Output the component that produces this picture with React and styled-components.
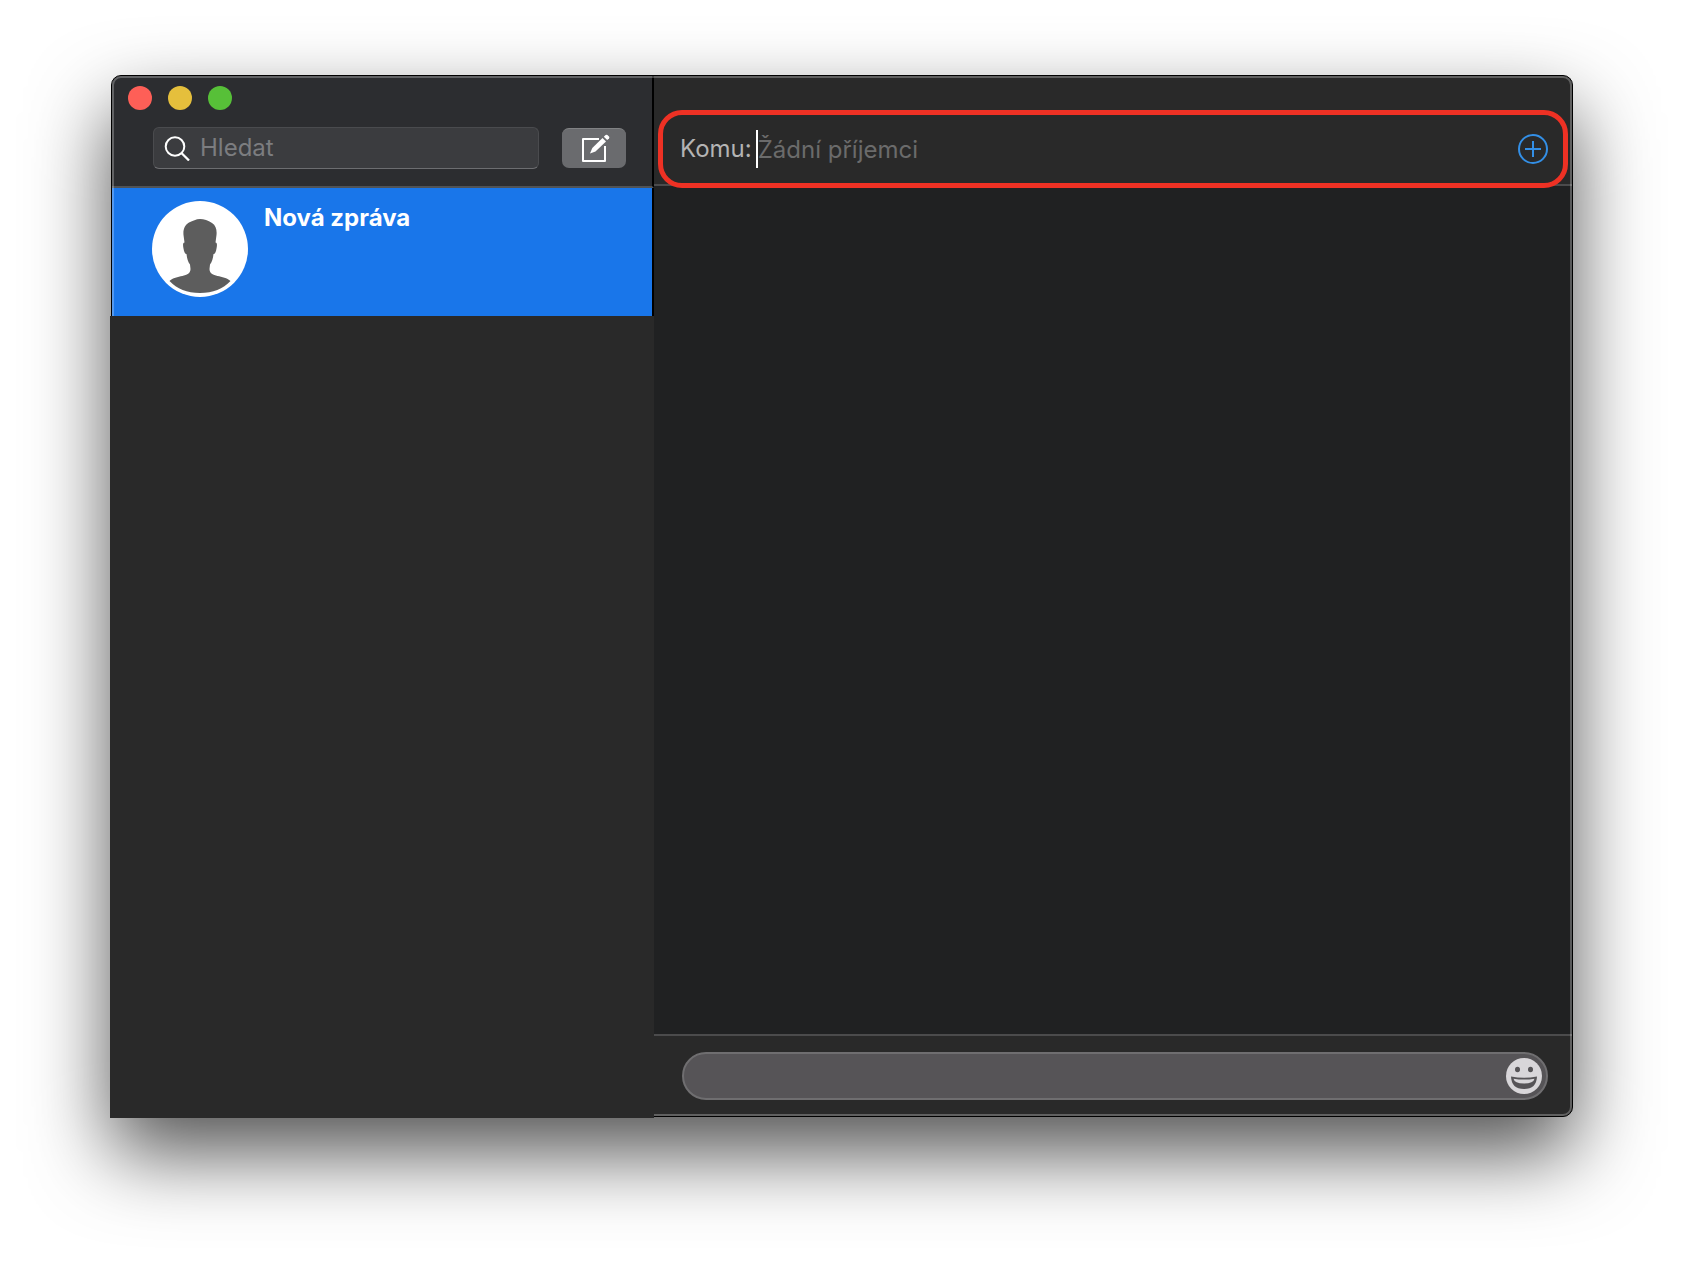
import React from 'react';
import styled, { createGlobalStyle } from 'styled-components';

export default function App() {
  return (
    <Page>
      <GlobalStyle />
      <Window>
        <Sidebar>
          <SidebarHeader>
            <TrafficLights>
              <Light type="button" aria-label="Zavřít" $color="#fe5f57" />
              <Light type="button" aria-label="Minimalizovat" $color="#e5bf3c" />
              <Light type="button" aria-label="Zvětšit" $color="#57c038" />
            </TrafficLights>
            <Toolbar>
              <SearchBox>
                <SearchIcon />
                <SearchInput type="search" aria-label="Hledat" placeholder="Hledat" />
              </SearchBox>
              <ComposeButton type="button" aria-label="Nová zpráva">
                <ComposeIcon />
              </ComposeButton>
            </Toolbar>
          </SidebarHeader>
          <Conversation>
            <Avatar />
            <ConversationName>Nová zpráva</ConversationName>
          </Conversation>
          <SidebarRest />
        </Sidebar>

        <Main>
          <RecipientBar>
            <RecipientLabel htmlFor="recipients">Komu:</RecipientLabel>
            <Caret />
            <RecipientInput id="recipients" type="text" placeholder="Žádní příjemci" />
            <AddButton type="button" aria-label="Přidat příjemce">
              <PlusIcon />
            </AddButton>
          </RecipientBar>
          <Messages />
          <Composer>
            <MessageField>
              <MessageInput type="text" aria-label="Zpráva" />
              <EmojiButton type="button" aria-label="Emoji">
                <SmileyIcon />
              </EmojiButton>
            </MessageField>
          </Composer>
        </Main>
      </Window>
    </Page>
  );
}

function SearchIcon() {
  return (
    <svg width="26" height="26" viewBox="0 0 26 26" fill="none" stroke="#fff" strokeWidth="2">
      <circle cx="11" cy="11.5" r="9.3" />
      <path d="M17.7 18.2L25 25.5" strokeWidth="2.3" />
    </svg>
  );
}

function ComposeIcon() {
  return (
    <svg width="30" height="30" viewBox="0 0 30 30" fill="none">
      <path d="M18 6H2V28H24V13" stroke="#fff" strokeWidth="2" strokeLinejoin="round" />
      <path d="M9 20.5L11.3 15L21.5 5L25 8.4L14.5 18.5Z" fill="#fff" />
      <path d="M22.8 3.7L24.6 2Q25.5 1.3 26.4 2L28 3.6Q28.8 4.5 28 5.4L26.2 7.1Z" fill="#fff" />
    </svg>
  );
}

function PlusIcon() {
  return (
    <svg width="30" height="30" viewBox="0 0 30 30" fill="none" stroke="#338fe6" strokeWidth="2">
      <circle cx="15" cy="15" r="14" />
      <path d="M15 7V23M7 15H23" />
    </svg>
  );
}

function SmileyIcon() {
  return (
    <svg width="36" height="36" viewBox="0 0 36 36">
      <circle cx="18" cy="18" r="18" fill="#d8d6d9" />
      <ellipse cx="11.5" cy="11.5" rx="2.5" ry="2.8" fill="#565457" />
      <ellipse cx="24.5" cy="11.5" rx="2.5" ry="2.8" fill="#565457" />
      <path d="M5 18.5Q18 21 31 18.5Q30.5 31 18 31Q5.5 31 5 18.5Z" fill="#565457" />
      <path d="M7.5 20.7Q18 22.5 28.5 20.7Q27.5 25.5 18 25.5Q8.5 25.5 7.5 20.7Z" fill="#d8d6d9" />
    </svg>
  );
}

function Avatar() {
  return (
    <AvatarSvg viewBox="0 0 96 96" aria-hidden="true">
      <circle cx="48" cy="48" r="48" fill="#fff" />
      <path
        d="M48 18C44 18 41 20 37 21.5C32.5 24 31 29 31.5 34L32.5 41.5C30.5 42 31 44.5 31.5 47.5C32 51 33 53 34.5 53C35 57.5 36 61 38 63.5L38.5 68C38.5 77 24 73.5 17.5 80C25 88 35 92 48 92C61 92 71 88 78.5 80C72 73.5 57.5 77 57.5 68L58 63.5C60 61 61 57.5 61.5 53C63 53 64 51 64.5 47.5C65 44.5 65.5 42 63.5 41.5L64.5 34C65 29 64 24.5 60 22C56 19.5 52 18 48 18Z"
        fill="#5d5d5d"
      />
    </AvatarSvg>
  );
}

const GlobalStyle = createGlobalStyle`
  * {
    box-sizing: border-box;
  }

  body {
    margin: 0;
    background: #fff;
    font-family: Inter, sans-serif;
    font-size: 24px;
    line-height: 28px;
  }

  button {
    flex-shrink: 0;
    padding: 0;
    border: none;
    cursor: pointer;
  }

  input {
    min-width: 0;
    padding: 0;
    border: none;
    outline: none;
    background: none;
    color: #fff;
    font: inherit;
    appearance: none;
  }

  svg {
    display: block;
    flex-shrink: 0;
  }
`;

const Page = styled.div`
  display: flex;
  min-height: 100vh;
  padding: 75px 111px 147px;
  overflow: hidden;
`;

const Window = styled.div`
  position: relative;
  display: flex;
  flex: 1;
  border: 1px solid #000;
  border-radius: 10px;
  background: #292929;
  box-shadow: 0 36px 80px rgba(0, 0, 0, 0.68);

  &::after {
    content: '';
    position: absolute;
    inset: 0;
    border: 2px solid rgba(255, 255, 255, 0.26);
    border-radius: 9px;
    pointer-events: none;
  }
`;

const Sidebar = styled.aside`
  display: flex;
  flex: 0 0 542px;
  flex-direction: column;
  min-width: 0;
`;

const SidebarHeader = styled.header`
  padding: 10px 26px 17px 16px;
  border-right: 2px solid #000;
  border-bottom: 2px solid #505356;
  border-top-left-radius: 9px;
  background: #2c2d30;
`;

const TrafficLights = styled.div`
  display: flex;
  gap: 16px;
  margin-bottom: 17px;
`;

const Light = styled.button`
  width: 24px;
  height: 24px;
  border-radius: 50%;
  background: ${({ $color }) => $color};
`;

const Toolbar = styled.div`
  display: flex;
  align-items: center;
  gap: 23px;
  padding-left: 25px;
`;

const SearchBox = styled.div`
  display: flex;
  flex: 1;
  align-items: center;
  gap: 10px;
  min-width: 0;
  height: 42px;
  padding: 0 10px;
  border: 1px solid #4a4b4e;
  border-bottom-color: #6c6d70;
  border-radius: 6px;
  background: #3b3c3f;
`;

const SearchInput = styled.input`
  flex: 1;

  &::placeholder {
    color: #7c7d80;
  }
`;

const ComposeButton = styled.button`
  display: flex;
  align-items: center;
  justify-content: center;
  width: 64px;
  height: 40px;
  padding-bottom: 2px;
  padding-left: 4px;
  border-top: 1px solid #818284;
  border-radius: 7px;
  background: #6a6b6e;
`;

const Conversation = styled.div`
  display: flex;
  gap: 16px;
  height: 128px;
  padding: 13px 40px;
  border-right: 2px solid #000;
  background: #1976ea;
`;

const AvatarSvg = styled.svg`
  width: 96px;
  height: 96px;
`;

const ConversationName = styled.span`
  padding-top: 3px;
  color: #fff;
  font-weight: 700;
`;

/* Runs over the window edge on the left and at the bottom */
const SidebarRest = styled.div`
  position: relative;
  z-index: 1;
  flex: 1;
  margin: 0 0 -2px -2px;
  background: #292929;
`;

const Main = styled.main`
  display: flex;
  flex: 1;
  flex-direction: column;
  min-width: 0;
`;

const RecipientBar = styled.div`
  position: relative;
  display: flex;
  align-items: center;
  height: 110px;
  padding: 38px 24px 0 26px;
  border-bottom: 2px solid #4b4b4c;
  border-top-right-radius: 9px;

  &::after {
    content: '';
    position: absolute;
    z-index: 1;
    inset: 34px 4px -4px;
    border: 5px solid #ee3124;
    border-radius: 24px;
    pointer-events: none;
  }
`;

const RecipientLabel = styled.label`
  color: #b4b4b4;
`;

const Caret = styled.span`
  width: 2px;
  height: 38px;
  margin-left: 4px;
  background: #fff;
`;

const RecipientInput = styled.input`
  flex: 1;
  padding-top: 2px;

  &::placeholder {
    color: #6b6b6b;
  }
`;

const AddButton = styled.button`
  border-radius: 50%;
  background: none;
`;

const Messages = styled.section`
  flex: 1;
  background: #202122;
`;

const Composer = styled.footer`
  padding: 16px 24px 16px 28px;
  border-top: 2px solid #4b4b4c;
`;

const MessageField = styled.div`
  display: flex;
  align-items: center;
  height: 48px;
  padding: 0 4px 0 24px;
  border: 2px solid #6f6e70;
  border-radius: 24px;
  background: #565457;
`;

const MessageInput = styled.input`
  flex: 1;
`;

const EmojiButton = styled.button`
  border-radius: 50%;
  background: none;
`;
